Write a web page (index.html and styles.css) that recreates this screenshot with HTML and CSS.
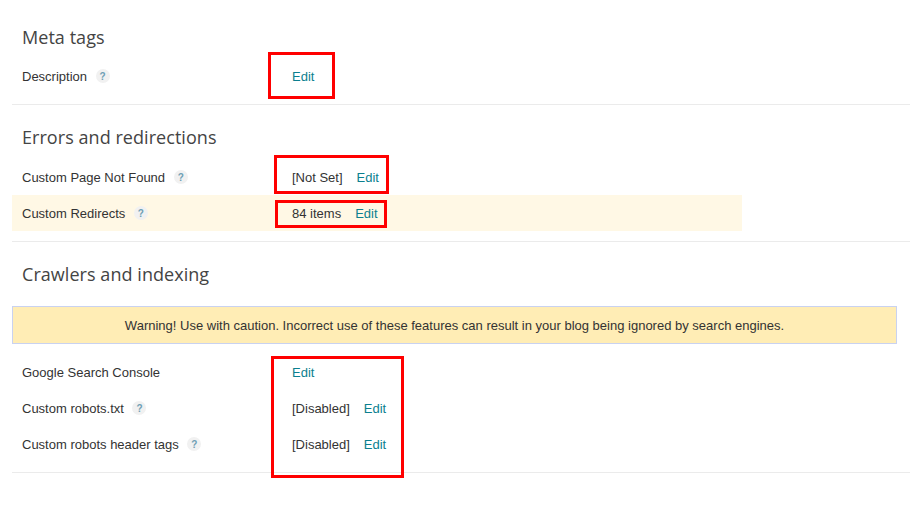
FILE: index.html
```html
<!DOCTYPE html>
<html lang="en">
<head>
    <meta charset="UTF-8">
    <meta name="viewport" content="width=device-width, initial-scale=1.0">
    <title>Search preferences</title>
    <link rel="stylesheet" href="styles.css">
</head>
<body>

    <div class="section">
        <h2>Meta tags</h2>
        <div class="row">
            <div class="label">Description <span class="help">?</span></div>
            <div class="value"><a href="#">Edit</a></div>
        </div>
    </div>

    <div class="section">
        <h2>Errors and redirections</h2>
        <div class="row">
            <div class="label">Custom Page Not Found <span class="help">?</span></div>
            <div class="value"><span>[Not Set]</span><a href="#">Edit</a></div>
        </div>
        <div class="row row-highlight">
            <div class="label">Custom Redirects <span class="help">?</span></div>
            <div class="value"><span>84 items</span><a href="#">Edit</a></div>
        </div>
    </div>

    <div class="section">
        <h2>Crawlers and indexing</h2>
        <div class="warning">Warning! Use with caution. Incorrect use of these features can result in your blog being ignored by search engines.</div>
        <div class="row">
            <div class="label">Google Search Console</div>
            <div class="value"><a href="#">Edit</a></div>
        </div>
        <div class="row">
            <div class="label">Custom robots.txt <span class="help">?</span></div>
            <div class="value"><span>[Disabled]</span><a href="#">Edit</a></div>
        </div>
        <div class="row">
            <div class="label">Custom robots header tags <span class="help">?</span></div>
            <div class="value"><span>[Disabled]</span><a href="#">Edit</a></div>
        </div>
    </div>

    <div class="mark mark-description"></div>
    <div class="mark mark-notfound"></div>
    <div class="mark mark-redirects"></div>
    <div class="mark mark-crawlers"></div>

</body>
</html>
```

FILE: styles.css
```css
body {
    position: relative;
    margin: 0;
    padding: 0 0 0 12px;
    height: 509px;
    overflow: hidden;
    box-sizing: border-box;
    background-color: #fff;
    font-family: "Liberation Sans", Arial, sans-serif;
    font-size: 13px;
    color: #333;
}
h2 {
    margin: 0 0 10px;
    padding-left: 10px;
    height: 24px;
    line-height: 24px;
    font-family: "Open Sans", sans-serif;
    font-size: 18px;
    font-weight: 400;
    letter-spacing: 0.05px;
    color: #444;
}
a {
    color: #0b7f8f;
    text-decoration: none;
}
.section {
    padding: 20px 0 10px;
    border-bottom: 1px solid #ebebeb;
}
.section:first-child {
    padding-top: 25px;
}
.section:first-child h2 {
    margin-bottom: 9px;
}
.row {
    display: flex;
    align-items: center;
    width: 730px;
    height: 36px;
}
.row-highlight {
    background-color: #fff8e5;
}
.label {
    display: flex;
    align-items: center;
    width: 270px;
    padding-left: 10px;
    white-space: pre-wrap;
}
.value {
    display: flex;
    gap: 14px;
}
.help {
    width: 14px;
    height: 14px;
    margin-left: 5px;
    border-radius: 50%;
    background-color: #f1f1f1;
    text-align: center;
    line-height: 15px;
    font-size: 10px;
    font-weight: bold;
    color: #6f9fb5;
}
.warning {
    margin: 20px 13px 10px 0;
    height: 38px;
    line-height: 37px;
    box-sizing: border-box;
    border: 1px solid #c9d2f0;
    background-color: #ffedb5;
    text-align: center;
}
.mark {
    position: absolute;
    box-sizing: border-box;
    border: 3px solid #f00;
}
.mark-description {
    left: 268px;
    top: 52px;
    width: 67px;
    height: 47px;
}
.mark-notfound {
    left: 274px;
    top: 155px;
    width: 115px;
    height: 39px;
}
.mark-redirects {
    left: 275px;
    top: 200px;
    width: 112px;
    height: 28px;
}
.mark-crawlers {
    left: 271px;
    top: 356px;
    width: 133px;
    height: 122px;
}
```
